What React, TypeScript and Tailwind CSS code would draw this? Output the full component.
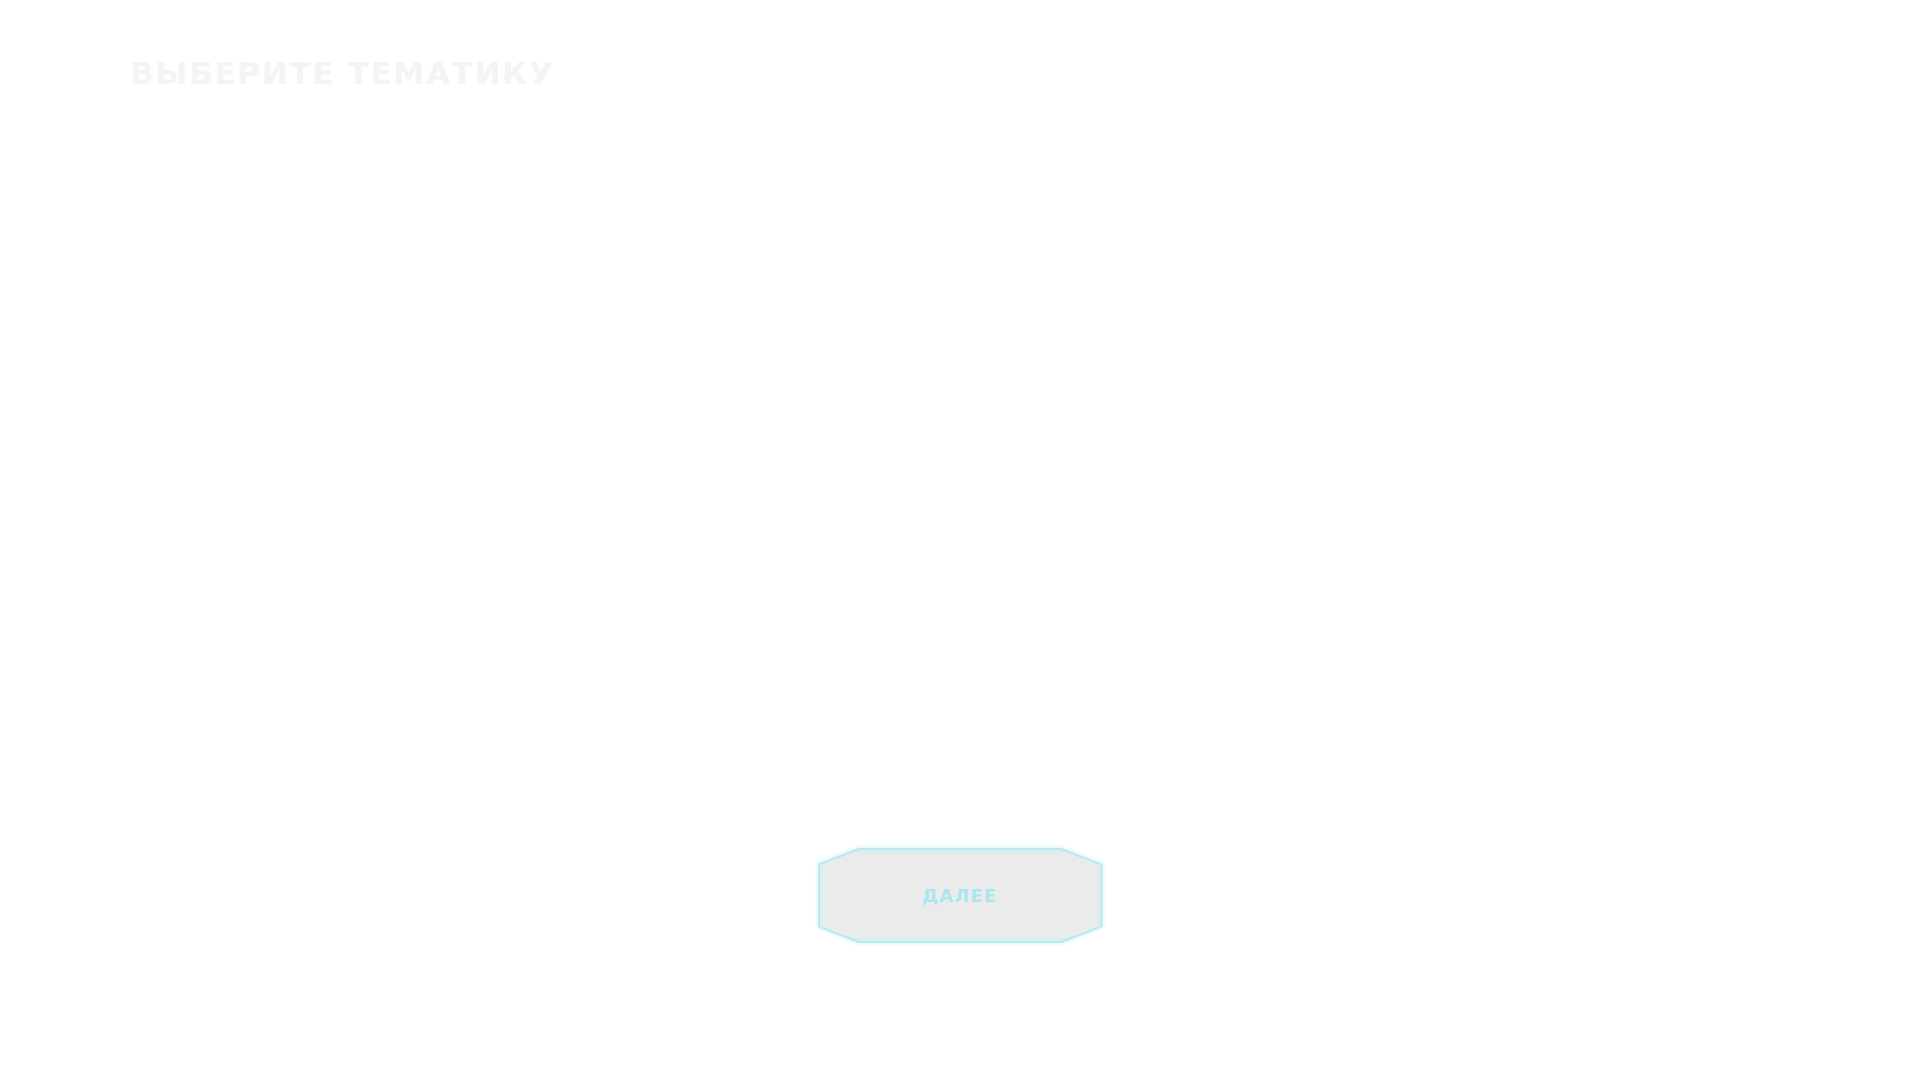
export default function App() {
  return (
    <div className="flex h-[1080px] w-full flex-col bg-white">
      <h1 className="pl-[130px] pt-[58px] font-['DejaVu_Sans',sans-serif] text-[31px] font-bold uppercase leading-none tracking-[1.7px] text-[#f4f4f4]">
        Выберите тематику
      </h1>

      <div className="mt-[759px] flex justify-center">
        <div className="[filter:drop-shadow(0_0_2px_#c5f1f6)]">
          <button
            className="block h-[95px] w-[285px] bg-[#b4ebf3] p-[2px] [clip-path:polygon(41px_0,244px_0,285px_16px,285px_79px,244px_95px,41px_95px,0_79px,0_16px)]"
          >
            <div className="flex h-full w-full items-center justify-center bg-[#ebebeb] shadow-[inset_0_0_8px_#cdeef2] [clip-path:polygon(40px_0,241px_0,281px_15px,281px_76px,241px_91px,40px_91px,0_76px,0_15px)]">
              <span className="font-['DejaVu_Sans',sans-serif] text-[18px] font-bold uppercase tracking-[1.2px] text-[#a9e7f0]">
                Далее
              </span>
            </div>
          </button>
        </div>
      </div>
    </div>
  )
}
